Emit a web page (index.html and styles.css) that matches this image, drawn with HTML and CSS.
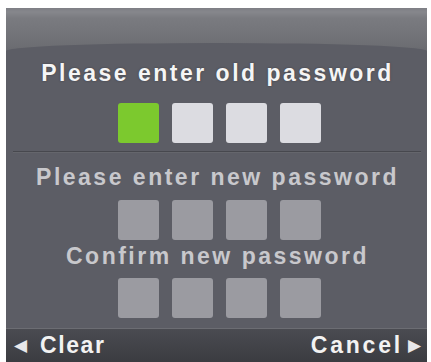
FILE: index.html
```html
<!DOCTYPE html>
<html>
<head>
<meta charset="utf-8">
<link rel="stylesheet" href="styles.css">
</head>
<body>
<div class="panel">
  <div class="gloss"></div>
  <div class="content">
    <div class="label label-active">Please enter old password</div>
    <div class="boxes boxes-old">
      <span class="box box-current"></span>
      <span class="box box-light"></span>
      <span class="box box-light"></span>
      <span class="box box-light"></span>
    </div>
    <div class="separator"></div>
    <div class="label label-dim label-new">Please enter new password</div>
    <div class="boxes boxes-new">
      <span class="box box-dim"></span>
      <span class="box box-dim"></span>
      <span class="box box-dim"></span>
      <span class="box box-dim"></span>
    </div>
    <div class="label label-dim label-confirm">Confirm new password</div>
    <div class="boxes boxes-confirm">
      <span class="box box-dim"></span>
      <span class="box box-dim"></span>
      <span class="box box-dim"></span>
      <span class="box box-dim"></span>
    </div>
  </div>
  <div class="bar">
    <div class="action action-left"><span class="arrow">&#9664;</span><span class="action-text">Clear</span></div>
    <div class="action action-right"><span class="action-text action-text-wide">Cancel</span><span class="arrow">&#9654;</span></div>
  </div>
</div>
</body>
</html>
```
FILE: styles.css
```css
html, body {
  margin: 0;
  padding: 0;
  background: #ffffff;
}
body {
  width: 431px;
  height: 362px;
  overflow: hidden;
  font-family: "Liberation Sans", Arial, sans-serif;
}
.panel {
  margin: 8px 4px 0 6px;
  height: 354px;
  display: flex;
  flex-direction: column;
  background: linear-gradient(#7e7f85 0px, #86878c 4px, #7a7b80 10px, #6f7075 34px, #6a6b70 42px);
}
.gloss {
  height: 35px;
  flex: none;
}
.content {
  flex: none;
  height: 285px;
  background: #5c5d65;
  border-radius: 50% 50% 0 0 / 8px 8px 0 0;
  display: flex;
  flex-direction: column;
  align-items: center;
  padding-top: 17px;
  box-sizing: border-box;
}
.label {
  font-weight: bold;
  font-size: 23px;
  line-height: 26px;
  letter-spacing: 2.5px;
  white-space: nowrap;
  padding-left: 2px;
}
.label-active {
  color: #f5f5f5;
  text-shadow: 0 0 2px rgba(40, 40, 45, 0.6);
}
.label-dim {
  color: #c8c8cc;
}
.boxes {
  display: flex;
  gap: 13px;
  margin-left: 5px;
}
.boxes-old {
  margin-top: 17px;
}
.boxes-new {
  margin-top: 10px;
}
.boxes-confirm {
  margin-top: 9px;
}
.label-new {
  margin-top: 11px;
}
.label-confirm {
  margin-top: 3px;
}
.box {
  width: 41px;
  height: 40px;
  border-radius: 3px;
}
.box-current {
  background: #7cc92e;
}
.box-light {
  background: #dcdce1;
}
.box-dim {
  background: #9b9ba1;
}
.separator {
  margin-top: 8px;
  width: 408px;
  height: 1px;
  background: #47484e;
  border-bottom: 1px solid #65666c;
}
.bar {
  flex: 1;
  border-top: 1px solid #6c6d73;
  background: linear-gradient(#4a4b51, #3b3c41);
  display: flex;
  justify-content: space-between;
  align-items: center;
  padding: 0 6px 0 8px;
}
.action {
  display: flex;
  align-items: center;
  color: #f2f2f2;
}
.action-left {
  gap: 13px;
}
.action-right {
  gap: 5px;
}
.action-text {
  font-weight: bold;
  font-size: 23px;
  letter-spacing: 1.6px;
}
.action-text-wide {
  letter-spacing: 2.8px;
}
.arrow {
  font-size: 17px;
  color: #e8e8ea;
}
```
